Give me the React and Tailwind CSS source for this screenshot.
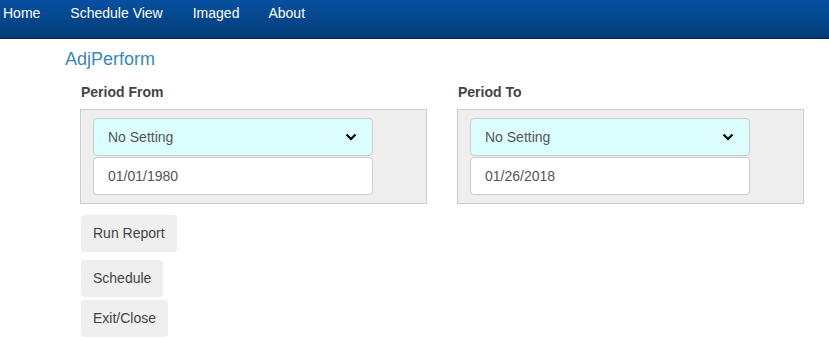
function Chevron() {
  return (
    <svg width="12" height="8" viewBox="0 0 12 8" className="shrink-0">
      <path d="M1.5 1.5 L6 6 L10.5 1.5" fill="none" stroke="#000" strokeWidth="2.2" />
    </svg>
  )
}

function PeriodPanel({ label, date }) {
  return (
    <div className="w-[347px]">
      <div className="h-[20px] pl-px text-[14px] leading-[20px] font-bold text-[#444]">{label}</div>
      <div className="mt-[7px] h-[95px] border border-[#ccc] bg-[#eee] pl-3 pt-2">
        <div className="flex h-[38px] w-[280px] items-center justify-between rounded border border-[#ccc] bg-[#dcfefe] pl-[14px] pr-[15px] text-[14px] text-[#555]">
          <span>No Setting</span>
          <Chevron />
        </div>
        <div className="mt-px flex h-[38px] w-[280px] items-center rounded border border-[#ccc] bg-white pl-[14px] text-[14px] text-[#555]">
          {date}
        </div>
      </div>
    </div>
  )
}

export default function App() {
  return (
    <div className="min-h-[339px] bg-white font-['Liberation_Sans',Arial,sans-serif]">
      <nav className="flex h-[39px] items-start border-b border-[#02203f] bg-gradient-to-b from-[#0750a0] to-[#033d78] text-[14px] text-white">
        <a className="ml-[3px] mt-[3px]">Home</a>
        <a className="ml-[30px] mt-[3px]">Schedule View</a>
        <a className="ml-[30px] mt-[3px]">Imaged</a>
        <a className="ml-[29px] mt-[3px]">About</a>
      </nav>
      <div className="pl-[65px] pt-[7px] text-[18px] leading-[27px] text-[#3a87b8]">AdjPerform</div>
      <div className="mt-[9px] flex gap-[30px] pl-[80px]">
        <PeriodPanel label="Period From" date="01/01/1980" />
        <PeriodPanel label="Period To" date="01/26/2018" />
      </div>
      <div className="flex flex-col items-start pl-[81px] pt-[11px] text-[14px] text-[#444]">
        <button className="h-[37px] rounded bg-[#efefef] px-[12px]">Run Report</button>
        <button className="mt-[8px] h-[37px] rounded bg-[#efefef] px-[12px]">Schedule</button>
        <button className="mt-[3px] h-[37px] rounded bg-[#efefef] px-[12px]">Exit/Close</button>
      </div>
    </div>
  )
}
